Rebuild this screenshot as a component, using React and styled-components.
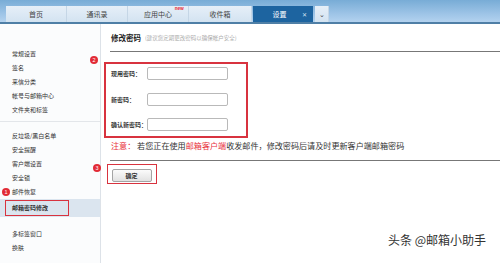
import React from 'react';
import styled, { createGlobalStyle } from 'styled-components';

const Global = createGlobalStyle`
  html, body { margin:0; padding:0; background:#fff; }
  body { font-family:"Noto Sans CJK SC","Liberation Sans",sans-serif; color:#333; }
`;

const Page = styled.div`
  width:500px;
  height:263px;
  overflow:hidden;
  position:relative;
  display:flex;
  flex-direction:column;
  background:#fff;
`;
const TopBar = styled.div`
  height:22px;
  border-bottom:2px solid #4f7fa6;
  background:linear-gradient(180deg,#78acd6 0%,#9cc3e6 60%,#b3d2ef 100%);
  display:flex;
  align-items:flex-end;
  padding-left:6px;
  box-sizing:content-box;
`;
const Tab = styled.div`
  position:relative;
  width:${p => p.w || 61}px;
  height:16px;
  display:flex;
  align-items:center;
  justify-content:center;
  font-size:7px;
  color:${p => p.active ? '#fff' : '#444'};
  background:${p => p.active ? '#1d64a0' : 'linear-gradient(180deg,#e6eff8,#d3e3f1)'};
  border-right:1px solid ${p => p.active ? '#1d64a0' : '#c5d6e6'};
  margin-left:${p => p.ml || 0}px;
  box-sizing:border-box;
`;
const NewMark = styled.span`
  position:absolute;
  top:0;
  right:4px;
  font-size:4.5px;
  line-height:5px;
  color:#e8303a;
  font-weight:700;
`;
const Close = styled.span`
  position:absolute;
  right:5px;
  top:4px;
  font-size:6px;
  color:#cfe0f0;
`;
const Body = styled.div`
  flex:1;
  display:flex;
`;
const Sidebar = styled.div`
  width:100px;
  border-right:1px solid #dde2e8;
  background:#fbfcfd;
  padding-top:23px;
`;
const Item = styled.div`
  height:${p => p.selected ? 18 : 14}px;
  line-height:${p => p.selected ? 18 : 14}px;
  padding-left:${p => p.selected ? 0 : 12}px;
  font-size:6px;
  color:#333;
  background:${p => p.selected ? '#dbe5ef' : 'transparent'};
  font-weight:${p => p.selected ? 700 : 400};
  display:flex;
  align-items:center;
`;
const Marked = styled.span`
  display:flex;
  align-items:center;
  margin-left:5px;
  width:64px;
  height:16px;
  padding-left:6px;
  border:1.5px solid #d8333f;
  box-sizing:border-box;
`;
const SideDivider = styled.div`
  height:1px;
  background:#e3e6ea;
  margin:4px 0 7px;
`;
const Gap = styled.div`
  height:${p => p.h}px;
`;
const Main = styled.div`
  flex:1;
  padding-left:3px;
`;
const Header = styled.div`
  height:27px;
  margin-left:6px;
  border-bottom:1px solid #777;
  display:flex;
  align-items:center;
  gap:4px;
`;
const Title = styled.span`
  font-size:7.5px;
  font-weight:700;
  color:#222;
  padding-left:1px;
`;
const Hint = styled.span`
  font-size:5.5px;
  color:#aaa;
`;
const FormBox = styled.div`
  margin-top:10px;
  width:144px;
  height:76px;
  border:2px solid #d8333f;
  box-sizing:border-box;
  padding:3px 0 0 5px;
  display:flex;
  flex-direction:column;
  gap:12.5px;
`;
const Row = styled.div`
  display:flex;
  align-items:center;
  height:13px;
`;
const Label = styled.span`
  width:36px;
  font-size:6px;
  font-weight:700;
  color:#333;
`;
const Input = styled.div`
  width:81px;
  height:13px;
  border:1px solid #b9b9b9;
  border-radius:2px;
  box-sizing:border-box;
  background:#fff;
`;
const Note = styled.div`
  margin:1px 0 0 7px;
  height:14px;
  line-height:14px;
  font-size:8.1px;
  color:#333;
  white-space:nowrap;
`;
const Red = styled.span`
  color:#e8303a;
`;
const Line = styled.div`
  margin:7px 0 0 6px;
  height:1px;
  background:#777;
`;
const BtnBox = styled.div`
  margin:3px 0 0 3px;
  width:50px;
  height:20px;
  border:1.5px solid #d8333f;
  box-sizing:border-box;
  padding:3.5px 0 0 3.5px;
`;
const Button = styled.div`
  width:40px;
  height:13px;
  border:1px solid #a4a4a4;
  border-radius:2px;
  box-sizing:border-box;
  background:linear-gradient(180deg,#fbfbfb,#e2e2e2);
  font-size:6px;
  font-weight:700;
  display:flex;
  align-items:center;
  justify-content:center;
  color:#333;
`;
const Badge = styled.div`
  position:absolute;
  left:${p => p.x - 4}px;
  top:${p => p.y - 4}px;
  width:8px;
  height:8px;
  border-radius:50%;
  background:#e22b36;
  color:#fff;
  font-size:5.5px;
  line-height:8px;
  text-align:center;
  font-family:"Liberation Sans",sans-serif;
`;
const Watermark = styled.div`
  position:absolute;
  left:388px;
  top:230px;
  font-size:12px;
  line-height:20px;
  color:#333;
  text-shadow:0 0 2px #fff;
  white-space:nowrap;
`;

const group1 = ['常规设置', '签名', '来信分类', '帐号与邮箱中心', '文件夹和标签'];
const group2 = ['反垃圾/黑白名单', '安全提醒', '客户端设置', '安全锁', '邮件恢复'];
const group3 = ['多标签窗口', '换肤'];

export default function App() {
  return (
    <Page>
      <Global />
      <TopBar>
        <Tab>首页</Tab>
        <Tab>通讯录</Tab>
        <Tab>应用中心<NewMark>new</NewMark></Tab>
        <Tab w={63}>收件箱</Tab>
        <Tab active w={60} ml={1}>
          <span style={{ marginRight: 6 }}>设置</span>
          <Close>✕</Close>
        </Tab>
        <Tab w={14} ml={2}>⌄</Tab>
      </TopBar>
      <Body>
        <Sidebar>
          {group1.map(t => <Item key={t}>{t}</Item>)}
          <SideDivider />
          {group2.map(t => <Item key={t}>{t}</Item>)}
          <Item selected><Marked>邮箱密码修改</Marked></Item>
          <Gap h={10} />
          {group3.map(t => <Item key={t}>{t}</Item>)}
        </Sidebar>
        <Main>
          <Header>
            <Title>修改密码</Title>
            <Hint>(建议您定期更改密码以确保帐户安全)</Hint>
          </Header>
          <FormBox>
            <Row><Label>现用密码：</Label><Input /></Row>
            <Row><Label>新密码：</Label><Input /></Row>
            <Row><Label>确认新密码：</Label><Input /></Row>
          </FormBox>
          <Note>
            <Red>注意：</Red> 若您正在使用<Red>邮箱客户端</Red>收发邮件，修改密码后请及时更新客户端邮箱密码
          </Note>
          <Line />
          <BtnBox>
            <Button>确定</Button>
          </BtnBox>
        </Main>
      </Body>
      <Badge x={6} y={192}>1</Badge>
      <Badge x={94} y={60}>2</Badge>
      <Badge x={97} y={168}>3</Badge>
      <Watermark>头条 @邮箱小助手</Watermark>
    </Page>
  );
}
